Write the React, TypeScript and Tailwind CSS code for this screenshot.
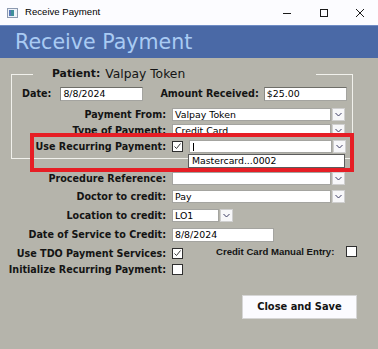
import React from "react";

const label = "font-bold text-[9.6px] text-[#141414] whitespace-nowrap leading-none";
const field = "bg-white border border-[#a4a4a0] text-[9.4px] text-black leading-none flex items-center pl-[2px] whitespace-nowrap";

function Chevron() {
  return (
    <svg width="7" height="5" viewBox="0 0 7 5">
      <path d="M0.5 1 L3.5 4 L6.5 1" fill="none" stroke="#3c3c64" strokeWidth="1" />
    </svg>
  );
}

function DropButton() {
  return (
    <div className="w-[13px] h-full bg-[#f7f7f9] border border-[#cfcfcf] flex items-center justify-center">
      <Chevron />
    </div>
  );
}

function Combo({ value, width, children }: { value?: string; width: string; children?: React.ReactNode }) {
  return (
    <div className="flex h-[13px] gap-px">
      <div className={`${field} ${width} h-full relative`}>
        {value}
        {children}
      </div>
      <DropButton />
    </div>
  );
}

function Check({ checked }: { checked?: boolean }) {
  return (
    <div className="w-[11px] h-[11px] bg-white border border-[#2f2f2f] flex items-center justify-center">
      {checked && (
        <svg width="9" height="9" viewBox="0 0 9 9">
          <path d="M1.5 4.5 L3.5 6.5 L7.5 1.5" fill="none" stroke="#3a3a3a" strokeWidth="1" />
        </svg>
      )}
    </div>
  );
}

function Row({ text, w, mt, children }: { text: string; w: string; mt: string; children: React.ReactNode }) {
  return (
    <div className={`flex items-center gap-[6px] ${mt}`}>
      <div className={`${w} text-right ${label}`}>{text}</div>
      {children}
    </div>
  );
}

export default function App() {
  return (
    <div className="w-[378px] h-[349px] overflow-hidden bg-[#b5b4ab] flex flex-col" style={{ fontFamily: '"DejaVu Sans", Verdana, sans-serif' }}>
      {/* window title bar */}
      <div className="h-[25px] bg-[#fcfcff] flex items-center shrink-0" style={{ fontFamily: '"Liberation Sans", Arial, sans-serif' }}>
        <svg className="ml-[7px]" width="11" height="10" viewBox="0 0 11 10">
          <rect x="0.5" y="0.5" width="10" height="9" fill="#eef2f8" stroke="#8d9ab0" />
          <rect x="2" y="2" width="5" height="6" fill="#3f8f9a" />
          <rect x="2" y="2" width="2" height="6" fill="#5877b8" />
        </svg>
        <span className="ml-[7px] text-[9.6px] text-black">Receive Payment</span>
        <div className="ml-auto flex items-center">
          <svg width="10" height="10" viewBox="0 0 10 10" className="mr-[27px]">
            <path d="M1 5.5 H9" stroke="#1a1a1a" strokeWidth="1" />
          </svg>
          <svg width="10" height="10" viewBox="0 0 10 10" className="mr-[26px]">
            <rect x="1.5" y="1.5" width="7" height="7" fill="none" stroke="#1a1a1a" strokeWidth="1" />
          </svg>
          <svg width="10" height="10" viewBox="0 0 10 10" className="mr-[13px]">
            <path d="M1 1 L9 9 M9 1 L1 9" stroke="#1a1a1a" strokeWidth="1" />
          </svg>
        </div>
      </div>

      {/* header band */}
      <div className="h-[33px] bg-[#4a69a6] border-t border-[#6f8cc4] flex items-center shrink-0">
        <span className="ml-[15px] text-[20.6px] text-[#a9cbf3] leading-none">Receive Payment</span>
      </div>

      <div className="relative flex-1">
        <fieldset className="ml-[11px] mt-[8px] w-[342px] border border-[#f1f1ec] pb-[5px]">
          <legend className="ml-[21px] w-[283px] pl-[19px] h-[16px] flex items-center gap-[5px] leading-none">
            <span className="font-bold text-[10.8px] text-[#141414]">Patient:</span>
            <span className="text-[12.3px] text-[#141414]">Valpay Token</span>
          </legend>

          <div className="flex items-center h-[14px] mt-[5px]">
            <span className={`${label} ml-[10px]`}>Date:</span>
            <div className={`${field} ml-[9px] w-[83px] h-full border-t-[#6e6e68] border-l-[#8a8a84]`}>8/8/2024</div>
            <span className={`${label} ml-[17px]`}>Amount Received:</span>
            <div className={`${field} ml-[5px] w-[83px] h-full border-t-[#6e6e68] border-l-[#8a8a84]`}>$25.00</div>
          </div>

          <Row text="Payment From:" w="w-[154px]" mt="mt-[7px]">
            <Combo value="Valpay Token" width="w-[159px]" />
          </Row>
          <Row text="Type of Payment:" w="w-[154px]" mt="mt-[3px]">
            <Combo value="Credit Card" width="w-[159px]" />
          </Row>
          <Row text="Use Recurring Payment:" w="w-[154px]" mt="mt-[3px]">
            <Check checked />
            <Combo width="w-[143px]">
              <div className="w-px h-[8px] bg-black ml-[1px]" />
            </Combo>
          </Row>
        </fieldset>

        <Row text="Procedure Reference:" w="w-[166px]" mt="mt-[13px]">
          <Combo width="w-[159px]" />
        </Row>
        <Row text="Doctor to credit:" w="w-[166px]" mt="mt-[5px]">
          <Combo value="Pay" width="w-[159px]" />
        </Row>
        <Row text="Location to credit:" w="w-[166px]" mt="mt-[6px]">
          <Combo value="LO1" width="w-[47px]" />
        </Row>
        <Row text="Date of Service to Credit:" w="w-[166px]" mt="mt-[6px]">
          <div className={`${field} w-[102px] h-[14px]`}>8/8/2024</div>
        </Row>
        <Row text="Use TDO Payment Services:" w="w-[166px]" mt="mt-[6px]">
          <Check checked />
          <span className="ml-[27px] font-bold text-[9.6px] text-[#141414] leading-none -translate-y-[2px]" style={{ fontFamily: '"Liberation Sans", Arial, sans-serif' }}>
            Credit Card Manual Entry:
          </span>
          <div className="ml-[6px] -translate-y-[2px]">
            <Check />
          </div>
        </Row>
        <Row text="Initialize Recurring Payment:" w="w-[166px]" mt="mt-[5px]">
          <Check />
        </Row>

        <button className="ml-[242px] mt-[20px] w-[115px] h-[24px] bg-[#fbfbff] border border-[#d6d6d6] font-bold text-[9.9px] text-[#141414]">
          Close and Save
        </button>

        {/* open dropdown list */}
        <div className="absolute left-[188px] top-[96px] w-[157px] h-[14px] bg-white border border-[#5c5c5c] text-[9.3px] leading-none flex items-center pl-[3px] text-black">
          Mastercard...0002
        </div>

        {/* red highlight annotation */}
        <div className="absolute left-[30px] top-[75px] w-[324px] h-[39px] border-4 border-[#e61e25]" />
      </div>
    </div>
  );
}
